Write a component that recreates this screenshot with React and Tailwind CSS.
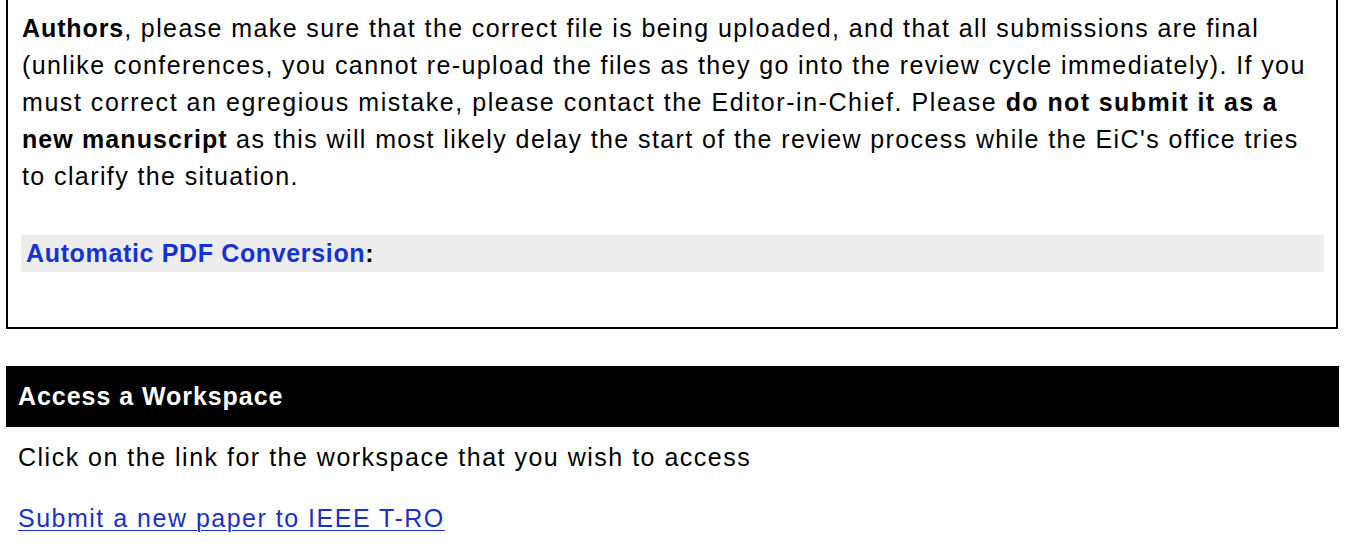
export default function App() {
  return (
    <div className="bg-white text-black w-[1346px] h-[550px] overflow-hidden" style={{ fontFamily: '"Liberation Sans", Arial, sans-serif' }}>
      <div className="ml-[6px] w-[1332px] border-x-2 border-b-2 border-black pt-[10px] pb-[55px] px-[13px] text-[25px] leading-[37px]">
        <p className="pl-[1px] whitespace-nowrap tracking-[1.4px]">
          <b className="tracking-[0.9px]">Authors</b>, please make sure that the correct file is being uploaded, and that all submissions are final
          <br />
          (unlike conferences, you cannot re-upload the files as they go into the review cycle immediately). If you
          <br />
          <span className="tracking-[1.55px]">must correct an egregious mistake, please contact the Editor-in-Chief. Please</span> <b className="tracking-[1.4px]">do not submit it as a</b>
          <br />
          <b className="tracking-[1.1px]">new manuscript</b> as this will most likely delay the start of the review process while the EiC's office tries
          <br />
          to clarify the situation.
        </p>
        <div className="mt-[40px] mr-[-1px] bg-[#ededed] pl-[5px] h-[37px] font-bold tracking-[0.65px]">
          <span className="text-[#1432d6]">Automatic PDF Conversion</span>:
        </div>
      </div>
      <div className="mt-[37px] ml-[6px] w-[1333px] h-[61px] bg-black text-white font-bold text-[25px] tracking-[0.95px] flex items-center pl-[12px]">
        Access a Workspace
      </div>
      <div className="ml-[18px] text-[25px] leading-[37px] tracking-[1.5px]">
        <p className="mt-[12px]">Click on the link for the workspace that you wish to access</p>
        <p className="mt-[24px]">
          <a href="#" className="text-[#1a30c8] underline decoration-1 underline-offset-[3px]">Submit a new paper to IEEE T-RO</a>
        </p>
      </div>
    </div>
  );
}
